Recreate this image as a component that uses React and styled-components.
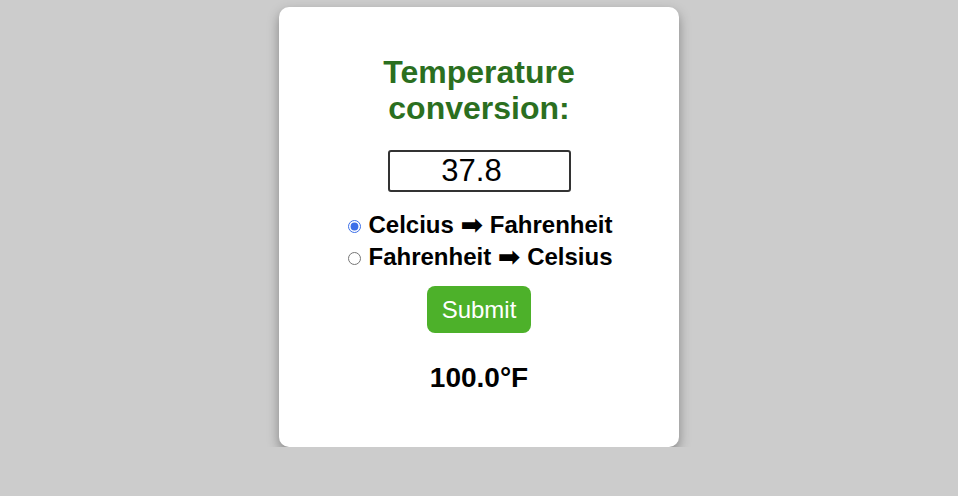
import { useState } from "react";
import styled, { createGlobalStyle } from "styled-components";

const GlobalStyle = createGlobalStyle`
  body {
    margin: 0;
    background: #cccccc;
    font-family: "Liberation Sans", Arial, sans-serif;
  }
`;

function App() {
  const [value, setValue] = useState("37.8");
  const [mode, setMode] = useState("c2f");
  const [result, setResult] = useState("100.0°F");

  const convert = () => {
    const n = parseFloat(value);
    if (isNaN(n)) return;
    if (mode === "c2f") {
      setResult(((n * 9) / 5 + 32).toFixed(1) + "°F");
    } else {
      setResult((((n - 32) * 5) / 9).toFixed(1) + "°C");
    }
  };

  return (
    <Page>
      <GlobalStyle />
      <Card>
        <Title>
          Temperature
          <br />
          conversion:
        </Title>
        <Input
          type="number"
          value={value}
          onChange={(e) => setValue(e.target.value)}
        />
        <Options>
          <Option>
            <Radio
              type="radio"
              name="mode"
              checked={mode === "c2f"}
              onChange={() => setMode("c2f")}
            />
            Celcius <Arrow>➡</Arrow> Fahrenheit
          </Option>
          <Option>
            <Radio
              type="radio"
              name="mode"
              checked={mode === "f2c"}
              onChange={() => setMode("f2c")}
            />
            Fahrenheit <Arrow>➡</Arrow> Celsius
          </Option>
        </Options>
        <Button onClick={convert}>Submit</Button>
        <Result>{result}</Result>
      </Card>
    </Page>
  );
}

export default App;

const Page = styled.div`
  display: flex;
  justify-content: center;
  padding-top: 7px;
`;

const Card = styled.div`
  width: 400px;
  box-sizing: border-box;
  padding: 47px 0 53px;
  background: #ffffff;
  border-radius: 10px;
  box-shadow: 0 5px 12px rgba(0, 0, 0, 0.35);
  display: flex;
  flex-direction: column;
  align-items: center;
`;

const Title = styled.h1`
  margin: 0;
  font-size: 32px;
  font-weight: 700;
  line-height: 36px;
  color: #2b6f1f;
  text-align: center;
`;

const Input = styled.input`
  margin-top: 24px;
  width: 183px;
  height: 42px;
  box-sizing: border-box;
  border: 2px solid #333333;
  border-radius: 3px;
  padding: 0;
  font-family: "Liberation Sans", Arial, sans-serif;
  font-size: 31px;
  text-align: center;
  color: #000;
  outline: none;
`;

const Options = styled.div`
  margin-top: 17px;
  display: flex;
  flex-direction: column;
  align-items: flex-start;
  padding-left: 3px;
`;

const Option = styled.label`
  display: flex;
  align-items: center;
  height: 32px;
  font-size: 24px;
  font-weight: 700;
  color: #000;
  white-space: pre;
`;

const Radio = styled.input`
  width: 13px;
  height: 13px;
  margin: 2px 7px 0 0;
  accent-color: #3b6ee8;
`;

const Arrow = styled.span`
  font-family: "DejaVu Sans", sans-serif;
  font-size: 27px;
  line-height: 24px;
`;

const Button = styled.button`
  margin-top: 13px;
  height: 47px;
  padding: 0 15px;
  background: #4db12a;
  color: #ffffff;
  border: none;
  border-radius: 8px;
  font-family: "Liberation Sans", Arial, sans-serif;
  font-size: 24px;
  cursor: pointer;
`;

const Result = styled.div`
  margin-top: 29px;
  font-size: 28px;
  font-weight: 700;
  line-height: 32px;
  color: #000;
`;
